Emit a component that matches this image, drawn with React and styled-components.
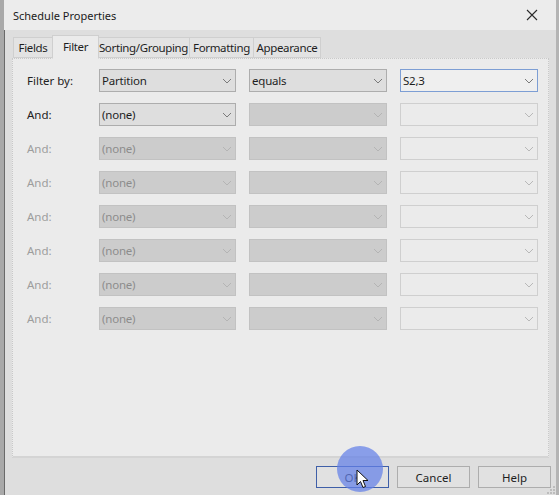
import React from 'react';
import styled, { createGlobalStyle } from 'styled-components';

const GlobalStyle = createGlobalStyle`
  html, body {
    margin: 0;
    padding: 0;
    background: #dedede;
  }
  * { box-sizing: border-box; }
`;

const Window = styled.div`
  position: relative;
  width: 559px;
  height: 495px;
  display: flex;
  flex-direction: column;
  background: #dedede;
  border-left: 4px solid #a9a9a9;
  border-right: 3px solid #b4b4b4;
  box-shadow: inset 1px 0 0 #6a6a6a;
  font-family: 'Segoe UI', 'Noto Sans', sans-serif;
  font-size: 11.5px;
  color: #1e1e1e;
  overflow: hidden;
`;

const TitleBar = styled.div`
  height: 30px;
  flex: none;
  display: flex;
  align-items: center;
  justify-content: space-between;
  padding: 0 18px 0 9px;
  background: #ececec;
`;

const Title = styled.span`
  font-size: 11px;
  color: #1b1b1b;
`;

const Body = styled.div`
  flex: 1;
  display: flex;
  flex-direction: column;
  padding: 5px 0 0 8px;
`;

const TabStrip = styled.div`
  display: flex;
  align-items: flex-end;
  height: 23px;
  padding-left: 1px;
  position: relative;
  z-index: 1;
`;

const Tab = styled.div`
  width: ${p => p.$w}px;
  height: ${p => (p.$active ? '24px' : '21px')};
  margin: 0 ${p => (p.$active ? '-1px' : '0')};
  display: flex;
  justify-content: center;
  align-items: ${p => (p.$active ? 'flex-start' : 'center')};
  padding-top: ${p => (p.$active ? '3px' : '0')};
  background: ${p => (p.$active ? '#ebebeb' : '#e3e3e3')};
  border: 1px solid #cfcfcf;
  border-bottom: ${p => (p.$active ? '1px solid #ebebeb' : '1px solid #cfcfcf')};
  border-left: ${p => (p.$first || p.$active ? '1px solid #cfcfcf' : 'none')};
  margin-bottom: ${p => (p.$active ? '-1px' : '0')};
  z-index: ${p => (p.$active ? 2 : 1)};
  color: #1e1e1e;
  font-size: 11.5px;
  letter-spacing: -0.35px;
  white-space: nowrap;
`;

const Panel = styled.div`
  width: 537px;
  height: 400px;
  background: #ebebeb;
  border: 1px dotted #c9c9c9;
  border-bottom: 2px solid #d4d4d4;
  padding: 10px 0 0 14px;
  display: flex;
  flex-direction: column;
  gap: 11px;
`;

const Row = styled.div`
  display: flex;
  align-items: center;
  height: 23px;
`;

const Label = styled.span`
  width: 72px;
  flex: none;
  color: ${p => (p.$disabled ? '#9d9d9d' : '#222')};
`;

const Combo = styled.div`
  width: ${p => p.$w || 137}px;
  height: 23px;
  flex: none;
  margin-right: 13px;
  display: flex;
  align-items: center;
  justify-content: space-between;
  padding: 0 3px 0 2px;
  background: ${p => p.$bg};
  border: 1px solid ${p => p.$border};
  color: ${p => p.$color || '#1e1e1e'};
  letter-spacing: -0.2px;
`;

const Chevron = ({ color }) => (
  <svg width="10" height="6" viewBox="0 0 10 6">
    <path d="M1 1 L5 5 L9 1" fill="none" stroke={color} strokeWidth="1" />
  </svg>
);

const ButtonRow = styled.div`
  display: flex;
  justify-content: flex-end;
  gap: 8px;
  padding: 8px 5px 0 0;
`;

const Button = styled.div`
  width: 73px;
  height: 22px;
  display: flex;
  align-items: center;
  justify-content: center;
  background: #e1e1e1;
  border: 1px solid ${p => (p.$primary ? '#3f5fa8' : '#adadad')};
  color: #1e1e1e;
`;

const Halo = styled.div`
  position: absolute;
  left: 333px;
  top: 446px;
  width: 46px;
  height: 46px;
  border-radius: 50%;
  background: rgba(98, 128, 232, 0.72);
  pointer-events: none;
`;

const Cursor = styled.svg`
  position: absolute;
  left: 352px;
  top: 469px;
`;

const Grip = styled.svg`
  position: absolute;
  right: 0;
  bottom: 0;
`;

const styles = {
  enabled: { bg: '#dedede', border: '#adadad', color: '#1e1e1e', chev: '#7a7a7a' },
  grayed: { bg: '#cccccc', border: '#c2c2c2', color: '#8c8c8c', chev: '#b4b4b4' },
  empty: { bg: '#ebebeb', border: '#cfcfcf', color: '#8c8c8c', chev: '#b8b8b8' },
  focus: { bg: '#efefef', border: '#7d9ed4', color: '#1e1e1e', chev: '#7a7a7a' },
};

const Select = ({ kind, text, w }) => {
  const s = styles[kind];
  return (
    <Combo $bg={s.bg} $border={s.border} $color={s.color} $w={w}>
      <span>{text}</span>
      <Chevron color={s.chev} />
    </Combo>
  );
};

const rows = [
  { label: 'Filter by:', cells: [['enabled', 'Partition'], ['enabled', 'equals'], ['focus', 'S2,3']] },
  { label: 'And:', cells: [['enabled', '(none)'], ['grayed', ''], ['empty', '']] },
  ...Array.from({ length: 6 }, () => ({
    label: 'And:',
    disabled: true,
    cells: [['grayed', '(none)'], ['grayed', ''], ['empty', '']],
  })),
];

const tabs = [
  ['Fields', 40],
  ['Filter', 47],
  ['Sorting/Grouping', 92],
  ['Formatting', 64],
  ['Appearance', 67],
];

export default function App() {
  return (
    <>
      <GlobalStyle />
      <Window>
        <TitleBar>
          <Title>Schedule Properties</Title>
          <svg width="12" height="12" viewBox="0 0 12 12">
            <path d="M1 1 L11 11 M11 1 L1 11" stroke="#2b2b2b" strokeWidth="1.1" />
          </svg>
        </TitleBar>
        <Body>
          <TabStrip>
            {tabs.map(([t, w], i) => (
              <Tab key={t} $w={w} $active={t === 'Filter'} $first={i === 0}>{t}</Tab>
            ))}
          </TabStrip>
          <Panel>
            {rows.map((r, i) => (
              <Row key={i}>
                <Label $disabled={r.disabled}>{r.label}</Label>
                {r.cells.map(([kind, text], j) => (
                  <Select key={j} kind={kind} text={text} w={j === 0 ? 137 : 138} />
                ))}
              </Row>
            ))}
          </Panel>
          <ButtonRow>
            <Button $primary>OK</Button>
            <Button>Cancel</Button>
            <Button>Help</Button>
          </ButtonRow>
        </Body>
        <Halo />
        <Cursor width="13" height="20" viewBox="0 0 13 20">
          <path d="M1 1 L1 16 L4.5 12.5 L7 18.5 L9.5 17.5 L7 11.5 L12 11.5 Z" fill="#ffffff" stroke="#111" strokeWidth="1" strokeLinejoin="round" />
        </Cursor>
        <Grip width="10" height="10" viewBox="0 0 10 10">
          <g fill="#bdbdbd">
            <rect x="7" y="1" width="2" height="2" />
            <rect x="4" y="4" width="2" height="2" />
            <rect x="7" y="4" width="2" height="2" />
            <rect x="1" y="7" width="2" height="2" />
            <rect x="4" y="7" width="2" height="2" />
            <rect x="7" y="7" width="2" height="2" />
          </g>
        </Grip>
      </Window>
    </>
  );
}
